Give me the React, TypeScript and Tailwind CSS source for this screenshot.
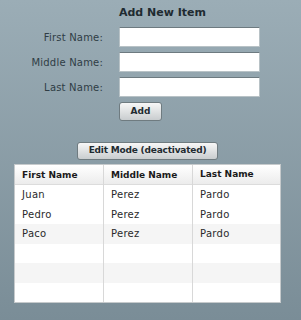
import React from 'react';

const rows = [
  { first: 'Juan', middle: 'Perez', last: 'Pardo' },
  { first: 'Pedro', middle: 'Perez', last: 'Pardo' },
  { first: 'Paco', middle: 'Perez', last: 'Pardo' },
  { first: '', middle: '', last: '' },
  { first: '', middle: '', last: '' },
  { first: '', middle: '', last: '' },
];

const rowBg = ['bg-white', 'bg-white', 'bg-[#f5f5f5]', 'bg-white', 'bg-[#f5f5f5]', 'bg-white'];

const App: React.FC = () => {
  return (
    <div className="h-[320px] w-[301px] bg-gradient-to-b from-[#9badb6] to-[#7a8d97] font-['DejaVu_Sans',sans-serif] text-[#2f3d45]">
      <div className="pt-[5px] pl-[24px] text-center text-[11px] font-bold leading-[16px] text-[#1f2b31]">Add New Item</div>

      {/* Form */}
      <div className="mt-[6px] ml-[14px] grid grid-cols-[89px_141px] items-center gap-x-[16px] gap-y-[5px] text-[10px]">
        <label className="text-right tracking-[0.2px]">First Name:</label>
        <input className="h-[20px] border border-[#b8c2c6] border-t-[#6d7a80] bg-white outline-none" />
        <label className="text-right tracking-[0.2px]">Middle Name:</label>
        <input className="h-[20px] border border-[#b8c2c6] border-t-[#6d7a80] bg-white outline-none" />
        <label className="text-right tracking-[0.2px]">Last Name:</label>
        <input className="h-[20px] border border-[#b8c2c6] border-t-[#6d7a80] bg-white outline-none" />
        <div />
        <div>
          <button className="h-[19px] w-[43px] rounded-[3px] border border-[#6f7b80] bg-gradient-to-b from-[#f7f7f7] to-[#c9cdcf] text-[9px] font-bold text-[#1f2b31]">
            Add
          </button>
        </div>
      </div>

      {/* Edit mode */}
      <div className="mt-[21px] ml-[14px] flex w-[267px] justify-center">
        <button className="h-[18px] w-[141px] rounded-[3px] border border-[#6f7b80] bg-gradient-to-b from-[#f7f7f7] to-[#c9cdcf] text-[9px] font-bold tracking-[-0.2px] text-[#1f2b31]">
          Edit Mode (deactivated)
        </button>
      </div>

      {/* Table */}
      <div className="mt-[4px] ml-[14px] w-[267px] border border-[#c6cacc] bg-white text-[10px]">
        <div className="grid h-[20px] grid-cols-[89px_89px_1fr] items-center border-b border-[#dcdcdc] bg-gradient-to-b from-white to-[#ececec] text-[9px] font-bold text-[#1a1a1a]">
          <div className="h-full border-r border-[#d8d8d8] pl-[7px] leading-[20px]">First Name</div>
          <div className="h-full border-r border-[#d8d8d8] pl-[7px] leading-[20px]">Middle Name</div>
          <div className="pl-[7px]">Last Name</div>
        </div>
        {rows.map((r, i) => (
          <div key={i} className={`grid h-[19.5px] grid-cols-[89px_89px_1fr] text-[#2a2a2a] tracking-[0.3px] ${rowBg[i]}`}>
            <div className="border-r border-[#d8d8d8] pl-[7px] leading-[19.5px]">{r.first}</div>
            <div className="border-r border-[#d8d8d8] pl-[7px] leading-[19.5px]">{r.middle}</div>
            <div className="pl-[7px] leading-[19.5px]">{r.last}</div>
          </div>
        ))}
      </div>
    </div>
  );
};

export default App;
